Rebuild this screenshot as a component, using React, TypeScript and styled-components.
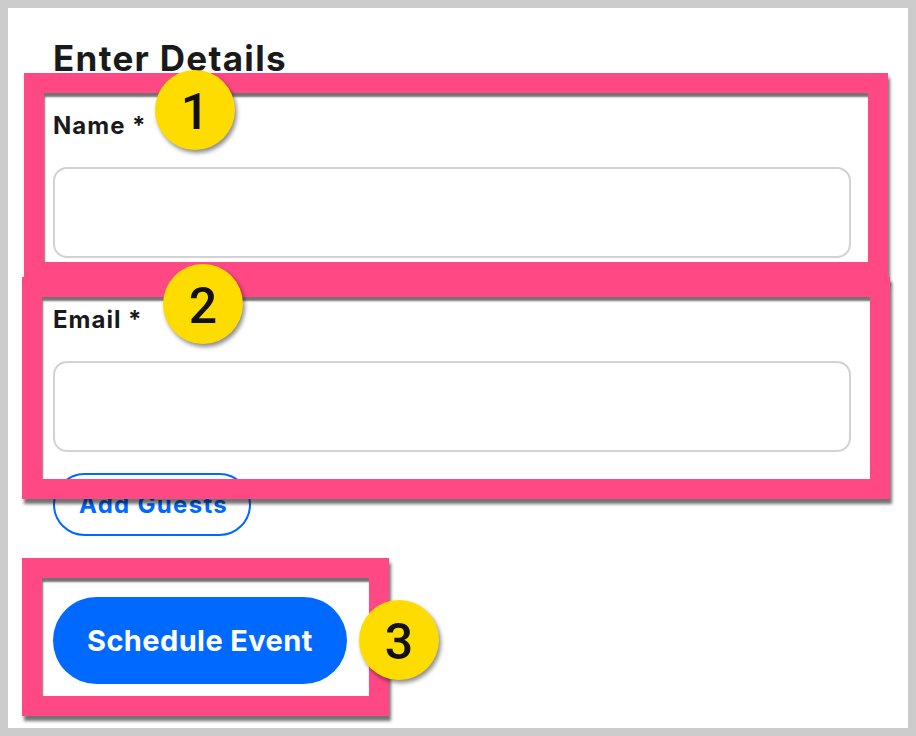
import React from "react";
import styled, { createGlobalStyle } from "styled-components";

const GlobalStyle = createGlobalStyle`
  html, body {
    margin: 0;
    padding: 0;
    background: #cccccc;
  }
  * { box-sizing: border-box; }
`;

const Frame = styled.div`
  position: relative;
  margin: 8px;
  width: 900px;
  height: 720px;
  background: #ffffff;
  padding: 30px 0 0 45px;
  font-family: "Inter", "Lato", sans-serif;
  color: #1a1a1a;
  overflow: hidden;
`;

const Heading = styled.h1`
  margin: 0;
  font-size: 35px;
  line-height: 40px;
  font-weight: 700;
  letter-spacing: 1.3px;
`;

const Form = styled.form`
  display: flex;
  flex-direction: column;
  align-items: flex-start;
  padding-top: 34px;
`;

const Field = styled.div`
  display: flex;
  flex-direction: column;
  gap: 27px;
  & + & {
    margin-top: 48px;
  }
`;

const Label = styled.label`
  display: block;
  font-size: 24px;
  line-height: 28px;
  font-weight: 700;
  letter-spacing: 1px;
`;

const Input = styled.input`
  display: block;
  width: 798px;
  height: 91px;
  border: 2px solid #d2d2d2;
  border-radius: 14px;
  background: #fff;
  outline: none;
`;

const Actions = styled.div`
  display: flex;
  flex-direction: column;
  align-items: flex-start;
  gap: 61px;
  padding-top: 21px;
`;

const OutlineButton = styled.button`
  height: 63px;
  padding: 0 21px 0 24px;
  border: 2px solid #0069ff;
  border-radius: 40px;
  background: #fff;
  color: #0069ff;
  font-family: "Inter", sans-serif;
  font-size: 24px;
  font-weight: 700;
  letter-spacing: 1.3px;
`;

const PrimaryButton = styled.button`
  height: 87px;
  padding: 0 34px;
  border: none;
  border-radius: 44px;
  background: #0069ff;
  color: #fff;
  font-family: "Inter", sans-serif;
  font-size: 29px;
  font-weight: 700;
  letter-spacing: 0.4px;
`;

const Highlight = styled.div<{ $l: number; $t: number; $w: number; $h: number }>`
  position: absolute;
  left: ${(p) => p.$l}px;
  top: ${(p) => p.$t}px;
  width: ${(p) => p.$w}px;
  height: ${(p) => p.$h}px;
  border: 20px solid #ff4884;
  box-shadow: 2px 5px 3px rgba(0, 0, 0, 0.55),
    inset 1px 4px 2px rgba(0, 0, 0, 0.55);
  pointer-events: none;
`;

const Badge = styled.div<{ $l: number; $t: number }>`
  position: absolute;
  left: ${(p) => p.$l}px;
  top: ${(p) => p.$t}px;
  width: 80px;
  height: 80px;
  border-radius: 50%;
  background: #ffdc00;
  box-shadow: 2px 3px 4px rgba(0, 0, 0, 0.45);
  display: flex;
  align-items: center;
  justify-content: center;
  font-family: "Roboto", "Liberation Sans", sans-serif;
  font-weight: 500;
  font-size: 50px;
  line-height: 1;
  color: #111;
  padding-top: 3px;
`;

export default function App() {
  return (
    <>
      <GlobalStyle />
      <Frame>
        <Heading>Enter Details</Heading>
        <Form onSubmit={(e) => e.preventDefault()}>
          <Field>
            <Label htmlFor="name">Name *</Label>
            <Input id="name" type="text" />
          </Field>
          <Field>
            <Label htmlFor="email">Email *</Label>
            <Input id="email" type="email" />
          </Field>
          <Actions>
            <OutlineButton type="button">Add Guests</OutlineButton>
            <PrimaryButton type="submit">Schedule Event</PrimaryButton>
          </Actions>
        </Form>
        <Highlight $l={16} $t={65} $w={864} $h={209} />
        <Highlight $l={14} $t={269} $w={868} $h={222} />
        <Highlight $l={14} $t={550} $w={367} $h={158} />
        <Badge $l={147} $t={62}>1</Badge>
        <Badge $l={155} $t={256}>2</Badge>
        <Badge $l={351} $t={592}>3</Badge>
      </Frame>
    </>
  );
}
